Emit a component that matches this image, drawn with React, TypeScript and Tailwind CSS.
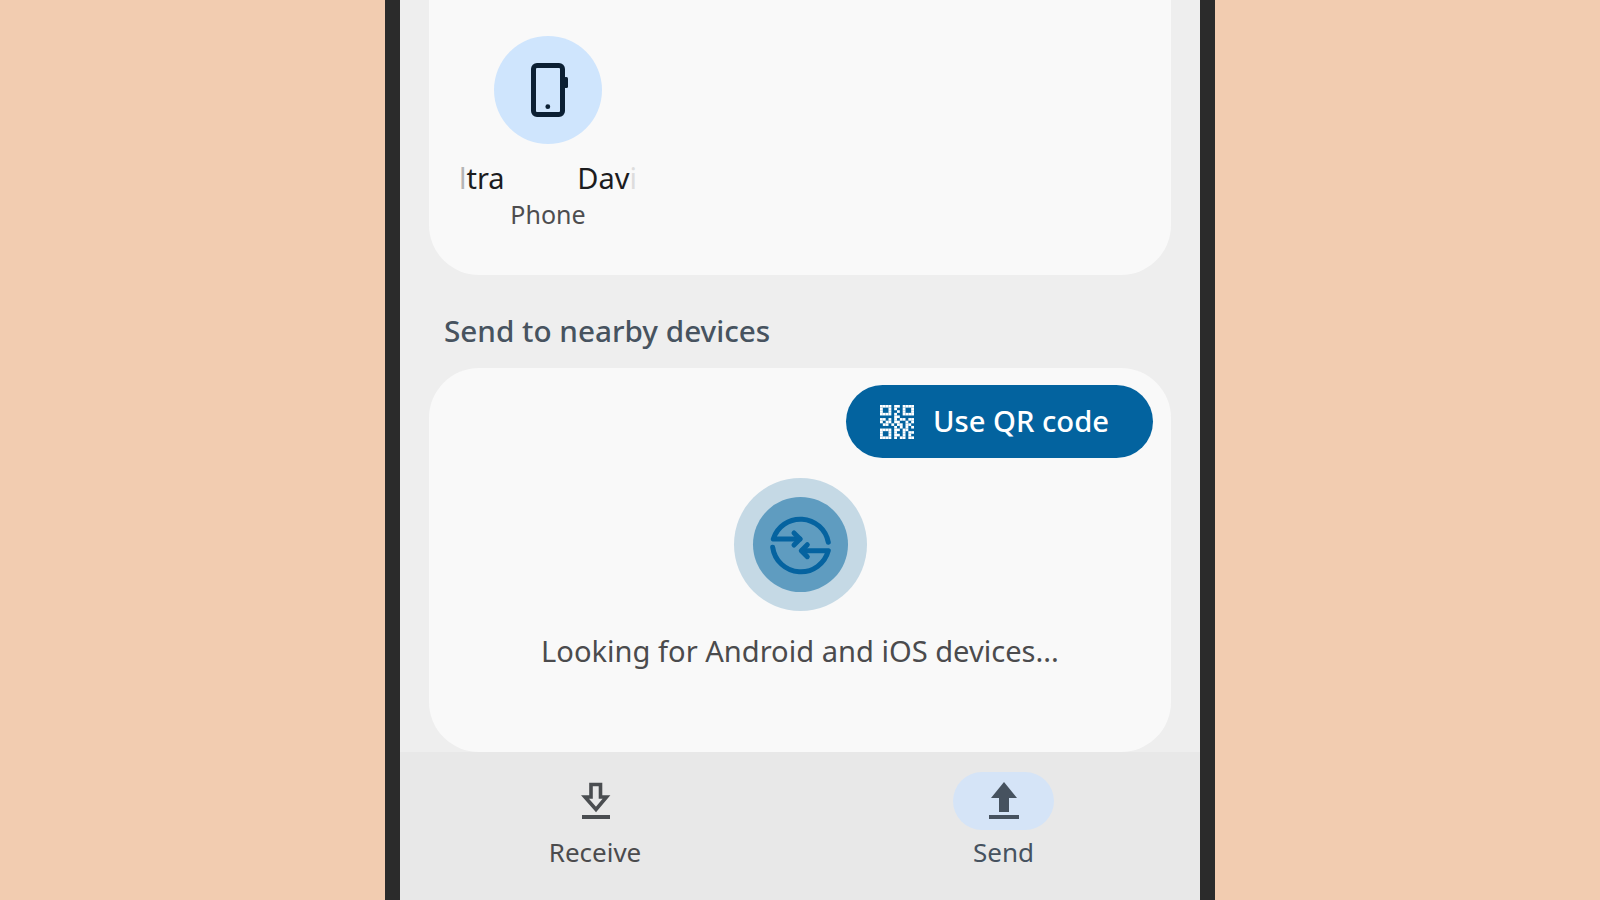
const font = { fontFamily: '"Noto Sans", sans-serif' };

const PhoneIcon = () => (
  <svg width="40" height="54" viewBox="0 0 40 54" fill="none">
    <rect x="5.5" y="2.5" width="29" height="49" rx="3.5" stroke="#0b1f33" strokeWidth="5" />
    <rect x="36" y="14" width="4" height="11" rx="1.5" fill="#0b1f33" />
    <circle cx="19.8" cy="43.7" r="2.4" fill="#0b1f33" />
  </svg>
);

const qrRows = [
  '1111.11.1111.',
  '1..1.1..1..1.',
  '1..1..1.1..1.',
  '1111.1..1111.',
  '.....11......',
  '11.1.1.11.11.',
  '1.11.11..1.1.',
  '.11.1.11.11..',
  '.....1.1.1.1.',
  '1111.11.11...',
  '1..1.1..1.11.',
  '1..1.11.1.1..',
  '1111.1.11.11.',
];

const QrIcon = () => (
  <svg width="34" height="34" viewBox="0 0 12 13" fill="#fff" preserveAspectRatio="none">
    {qrRows.map((row, y) =>
      row.split('').map((cell, x) =>
        cell === '1' ? <rect key={`${x}-${y}`} x={x} y={y} width="1" height="1" /> : null,
      ),
    )}
  </svg>
);

const ScanIcon = () => (
  <svg width="70" height="70" viewBox="0 0 70 70" fill="none" stroke="#0563a0" strokeWidth="5" strokeLinecap="round" strokeLinejoin="round">
    <path d="M63.3 32.3A28.4 28.4 0 0 0 8.3 29H35" />
    <path d="M29 23l6 6-6 6" />
    <path d="M7.7 37.3A28.4 28.4 0 0 0 63.3 40.7H37" />
    <path d="M42.3 34.7l-6 6 6 6" />
  </svg>
);

const ReceiveIcon = () => (
  <svg width="30" height="38" viewBox="0 0 30 38" fill="none">
    <path d="M10 2.5h9.5v12.5h6L15 27.5 4 15h6z" stroke="#4a4d50" strokeWidth="3.6" />
    <rect x="1" y="33" width="28" height="4" fill="#4a4d50" />
  </svg>
);

const SendIcon = () => (
  <svg width="30" height="38" viewBox="0 0 30 38" fill="#46525f">
    <path d="M15 0l13 16h-8v14H10V16H2z" />
    <rect x="0" y="33" width="30" height="4" />
  </svg>
);

export default function App() {
  return (
    <div className="h-screen w-full overflow-hidden bg-[#f2ccb0] flex justify-center" style={font}>
      <div className="w-[830px] h-full border-x-[15px] border-[#2b2b2b] bg-[#eeeeee] flex flex-col">
        <div className="flex-1 px-[29px] flex flex-col">
          <div className="h-[275px] bg-[#f9f9f9] rounded-b-[50px] pl-[30px] pt-[36px]">
            <div className="w-[178px] flex flex-col items-center">
              <div className="w-[108px] h-[108px] rounded-full bg-[#cfe5fd] flex items-center justify-center">
                <PhoneIcon />
              </div>
              <div className="w-full flex justify-between text-[29px] leading-[36px] mt-[16px] text-[#1c1c1e]">
                <span><span className="text-[#b5b5b5]">l</span>tra</span>
                <span>Dav<span className="text-[#dddddd]">i</span></span>
              </div>
              <div className="text-[25px] leading-[36px] text-[#4d4d4f]">Phone</div>
            </div>
          </div>

          <div className="h-[93px] flex items-center pl-[15px] pt-[20px] text-[29.7px] font-medium text-[#47535f]">
            Send to nearby devices
          </div>

          <div className="h-[384px] bg-[#f9f9f9] rounded-[50px] pt-[17px] pr-[18px] flex flex-col">
            <div className="flex justify-end">
              <div className="w-[307px] h-[73px] rounded-full bg-[#03639f] flex items-center pl-[34px] gap-[19px] text-white text-[29.2px] font-medium">
                <QrIcon />
                <span>Use QR code</span>
              </div>
            </div>
            <div className="flex flex-col items-center pl-[18px] mt-[20px]">
              <div className="w-[133px] h-[133px] rounded-full bg-[#c5d9e5] flex items-center justify-center">
                <div className="w-[95px] h-[95px] rounded-full bg-[#5f9cc0] flex items-center justify-center">
                  <ScanIcon />
                </div>
              </div>
              <div className="mt-[20px] text-[29.1px] leading-[40px] text-[#4b4b4d]">
                Looking for Android and iOS devices...
              </div>
            </div>
          </div>
        </div>

        <div className="h-[148px] bg-[#e8e8e8] pl-[145px] pt-[20px] flex gap-[308px]">
          <div className="w-[100px] flex flex-col items-center">
            <div className="h-[58px] flex items-center justify-center pl-[1px]">
              <ReceiveIcon />
            </div>
            <div className="mt-[4px] text-[26px] leading-[36px] text-[#4b4b4d] whitespace-nowrap">Receive</div>
          </div>
          <div className="w-[101px] flex flex-col items-center">
            <div className="w-[101px] h-[58px] rounded-full bg-[#d5e4f7] flex items-center justify-center">
              <SendIcon />
            </div>
            <div className="mt-[4px] text-[26px] leading-[36px] text-[#46525f]">Send</div>
          </div>
        </div>
      </div>
    </div>
  );
}
